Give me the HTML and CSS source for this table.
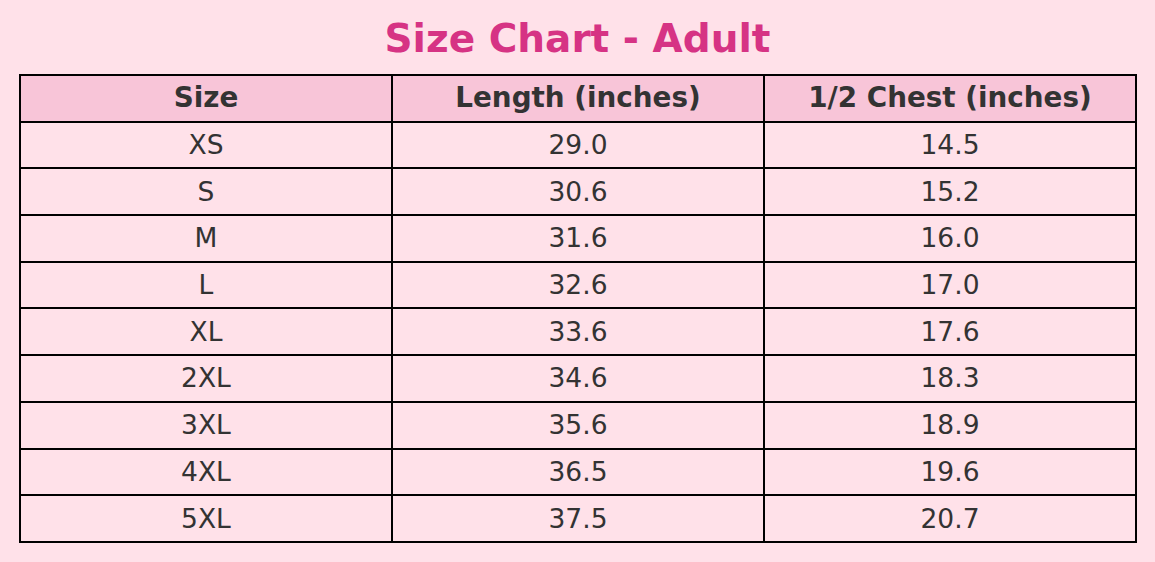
FILE: index.html
```html
<!DOCTYPE html>
<html>
<head>
<meta charset="utf-8">
<link rel="stylesheet" href="styles.css">
</head>
<body>
<main class="page">
  <h1 class="title">Size Chart - Adult</h1>
  <table class="chart">
    <thead>
      <tr><th>Size</th><th>Length (inches)</th><th>1/2 Chest (inches)</th></tr>
    </thead>
    <tbody>
      <tr><td>XS</td><td>29.0</td><td>14.5</td></tr>
      <tr><td>S</td><td>30.6</td><td>15.2</td></tr>
      <tr><td>M</td><td>31.6</td><td>16.0</td></tr>
      <tr><td>L</td><td>32.6</td><td>17.0</td></tr>
      <tr><td>XL</td><td>33.6</td><td>17.6</td></tr>
      <tr><td>2XL</td><td>34.6</td><td>18.3</td></tr>
      <tr><td>3XL</td><td>35.6</td><td>18.9</td></tr>
      <tr><td>4XL</td><td>36.5</td><td>19.6</td></tr>
      <tr><td>5XL</td><td>37.5</td><td>20.7</td></tr>
    </tbody>
  </table>
</main>
</body>
</html>
```
FILE: styles.css
```css
html, body {
  margin: 0;
  padding: 0;
  background: #ffe1e9;
}
body {
  font-family: "DejaVu Sans", sans-serif;
  width: 1155px;
  height: 562px;
  overflow: hidden;
}
.page {
  padding: 0 19px 0 19px;
}
.title {
  margin: 0;
  height: 74px;
  box-sizing: border-box;
  padding-top: 14px;
  text-align: center;
  font-size: 39px;
  line-height: 50px;
  font-weight: bold;
  color: #d63384;
}
.chart {
  width: 1118px;
  border-collapse: collapse;
  table-layout: fixed;
  font-size: 26.5px;
  color: #333333;
}
.chart th, .chart td {
  border: 2px solid #000;
  text-align: center;
  padding: 0 0 1px 0;
  height: 43.7px;
}
.chart th {
  background: #f8c5d8;
  font-weight: bold;
  font-size: 27.8px;
}
.chart td {
  background: #ffe1e9;
}
```
